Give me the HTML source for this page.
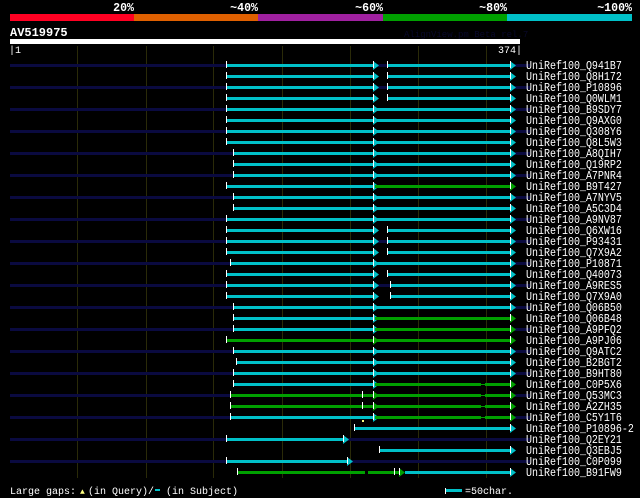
<!DOCTYPE html>
<html><head><meta charset="utf-8"><style>
html,body{margin:0;padding:0;background:#000;width:640px;height:498px;overflow:hidden}
svg{display:block}
text{font-family:"Liberation Mono","DejaVu Sans Mono",monospace;fill:#fff;font-size:10px}
</style></head><body>
<svg id="s" width="640" height="498" xmlns="http://www.w3.org/2000/svg">
<rect width="640" height="498" fill="#000"/>
<g font-weight="bold" text-anchor="end" style="font-size:11.6px">
<text x="134" y="11" style="font-size:11.6px">20%</text>
<text x="258" y="11" style="font-size:11.6px">~40%</text>
<text x="383" y="11" style="font-size:11.6px">~60%</text>
<text x="507" y="11" style="font-size:11.6px">~80%</text>
<text x="632" y="11" style="font-size:11.6px">~100%</text>
</g>
<rect x="10" y="14" width="124" height="7" fill="#ff0022"/>
<rect x="134" y="14" width="124" height="7" fill="#e06000"/>
<rect x="258" y="14" width="125" height="7" fill="#a020a0"/>
<rect x="383" y="14" width="124" height="7" fill="#00a000"/>
<rect x="507" y="14" width="125" height="7" fill="#00c0c8"/>
<text x="10" y="36" font-weight="bold" style="font-size:12px">AV519975</text>
<text x="404" y="37" style="fill:#08082a;font-size:9px">AlignView.pm Beta rel.7</text>
<rect x="10" y="39" width="510" height="5" fill="#fff"/>
<text x="9" y="53">|1</text>
<text x="522" y="53" text-anchor="end">374|</text>
<g id="g"></g>
<g id="lab"></g>
<text x="10" y="494">Large gaps:</text>
<text x="80" y="494" style="fill:#ffff80;font-size:8px">▲</text>
<text x="88" y="494">(in Query)/</text>
<rect x="155" y="489" width="5" height="2" fill="#00c0c8"/>
<text x="166" y="494">(in Subject)</text>
<rect x="445" y="488" width="1" height="6" fill="#fff"/>
<rect x="446" y="489" width="16" height="3" fill="#00c0c8"/>
<text x="465" y="494">=50char.</text>
</svg>
<script>
var C="#00c0c8",G="#00a000",N="#0a0a40";
var names=["Q941B7","Q8H172","P10896","Q0WLM1","B9SDY7","Q9AXG0","Q308Y6","Q8L5W3","A8QIH7","Q19RP2","A7PNR4","B9T427","A7NYV5","A5C3D4","A9NV87","Q6XW16","P93431","Q7X9A2","P10871","Q40073","A9RES5","Q7X9A0","Q06B50","Q06B48","A9PFQ2","A9PJ06","Q9ATC2","B2BGT2","B9HT80","C0P5X6","Q53MC3","A2ZH35","C5Y1T6","P10896-2","Q2EY21","Q3EBJ5","C0P099","B91FW9"];
var R=[[226,C,387,C],[226,C,387,C],[226,C,387,C],[226,C,387,C],[226,C,375,C],[226,C,375,C],[226,C,375,C],[226,C,375,C],[233,C,375,C],[233,C,375,C],[233,C,375,C],[226,C,375,G],[233,C,375,C],[233,C,375,C],[226,C,375,C],[226,C,387,C],[226,C,387,C],[226,C,387,C],[230,C,375,C],[226,C,387,C],[226,C,390,C],[226,C,390,C],[233,C,375,C],[233,C,375,G],[233,C,375,G],[226,G,375,G],[233,C,375,C],[236,C,375,C],[233,C,375,C],[233,C,375,G],[230,G,375,G],[230,G,375,G],[230,C,375,G]];
var h="",l="";
function line(x1,x2,y,c){h+='<rect x="'+x1+'" y="'+(y-1)+'" width="'+(x2-x1)+'" height="3" fill="'+c+'"/>';}
function arrow(x,y,c){h+='<polygon points="'+x+','+(y-4)+' '+(x+6)+','+(y+0.5)+' '+x+','+(y+5)+'" fill="'+c+'"/><rect x="'+x+'" y="'+(y-4)+'" width="1" height="7" fill="#fff"/>';}
function tick(x,y){h+='<rect x="'+x+'" y="'+(y-4)+'" width="1" height="7" fill="#fff"/>';}
function navy(i,y){if(i%2==0)h+='<rect x="10" y="'+(y-1)+'" width="520" height="3" fill="'+N+'"/>';}
[77,146,213,282,350,418,486].forEach(function(x){h+='<rect x="'+x+'" y="46" width="1" height="432" fill="#2a2a08"/>';});
for(var i=0;i<38;i++){var y=65+11*i;
 l+='<text x="526" y="'+(y+4)+'" transform="translate(0,'+(y+4)+') scale(1,1.15) translate(0,'+(-(y+4))+')">UniRef100_'+names[i]+'</text>';
 navy(i,y);
 if(i<33){var r=R[i];
  line(r[0],373,y,r[1]);tick(r[0],y);arrow(373,y,r[1]);
  line(r[2],510,y,r[3]);if(r[2]>378)tick(r[2],y);arrow(510,y,r[3]);
  if(i>=29&&i<=32){h+='<rect x="481" y="'+(y-1)+'" width="4" height="3" fill="#000"/><rect x="481" y="'+y+'" width="4" height="1" fill="'+G+'"/>';}
 }
}
var y;
y=65+11*33;line(354,510,y,C);tick(354,y);arrow(510,y,C);
y=65+11*34;line(226,343,y,C);tick(226,y);arrow(343,y,C);
y=65+11*35;line(379,510,y,C);tick(379,y);arrow(510,y,C);
y=65+11*36;line(226,347,y,C);tick(226,y);arrow(347,y,C);
y=65+11*37;line(237,365,y,G);line(368,400,y,G);tick(237,y);tick(394,y);arrow(399,y,G);line(405,510,y,C);arrow(510,y,C);
y=65+11*30;h+='<rect x="362" y="'+(y-4)+'" width="1" height="7" fill="#fff"/>';
y=65+11*31;h+='<rect x="362" y="'+(y-4)+'" width="1" height="7" fill="#fff"/>';
y=65+11*32;h+='<rect x="362" y="'+(y+3)+'" width="2" height="2" fill="#ffff80"/>';
document.getElementById("g").innerHTML=h;
document.getElementById("lab").innerHTML=l;
</script>
</body></html>
